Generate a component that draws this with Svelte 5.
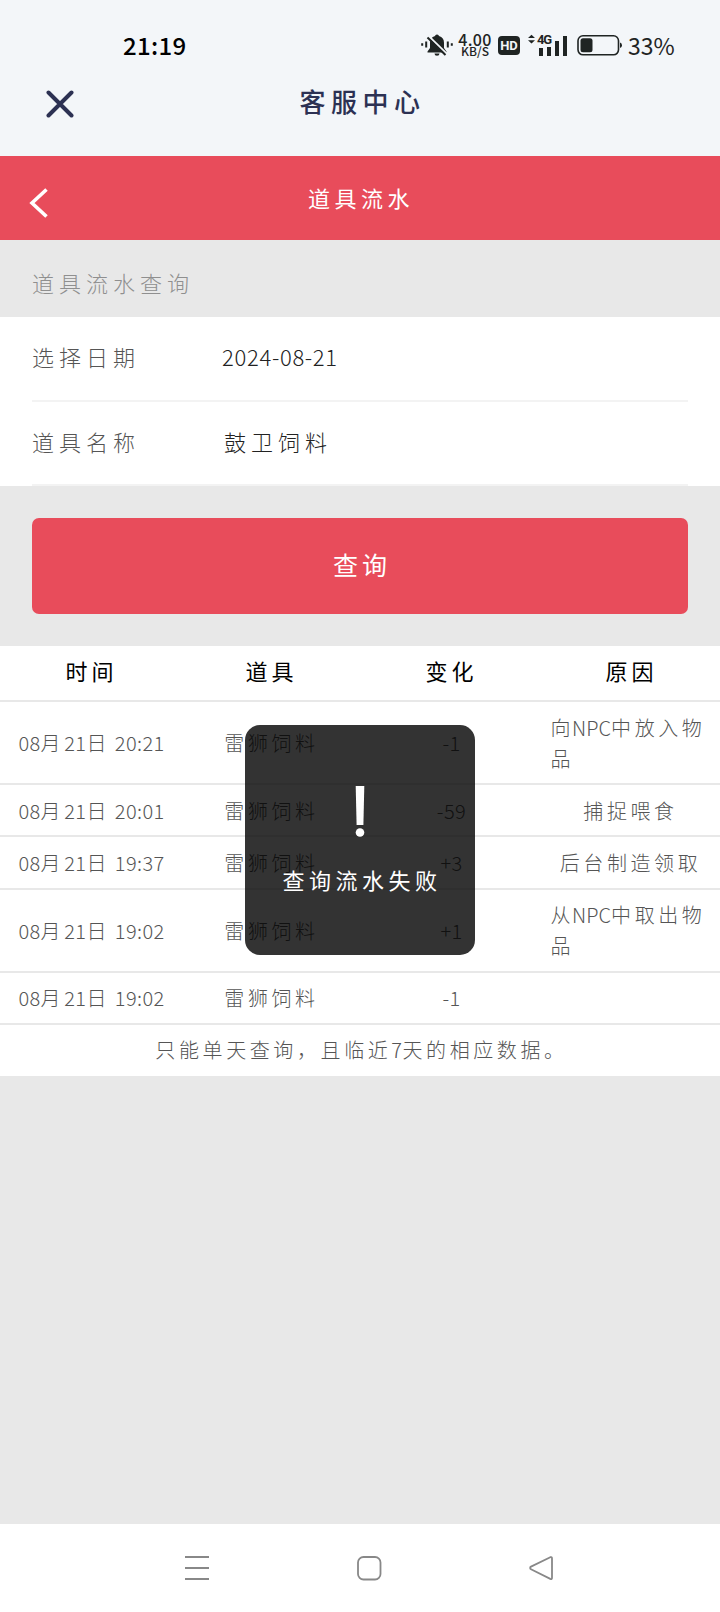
<script lang="ts">
	interface FlowRecord {
		time: string;
		item: string;
		change: string;
		reason: string;
	}

	const fields = [
		{ label: '选择日期', value: '2024-08-21' },
		{ label: '道具名称', value: '鼓卫饲料' }
	];

	const columns = ['时间', '道具', '变化', '原因'];

	const records: FlowRecord[] = [
		{ time: '08月21日 20:21', item: '雷狮饲料', change: '-1', reason: '向NPC中放入物品' },
		{ time: '08月21日 20:01', item: '雷狮饲料', change: '-59', reason: '捕捉喂食' },
		{ time: '08月21日 19:37', item: '雷狮饲料', change: '+3', reason: '后台制造领取' },
		{ time: '08月21日 19:02', item: '雷狮饲料', change: '+1', reason: '从NPC中取出物品' },
		{ time: '08月21日 19:02', item: '雷狮饲料', change: '-1', reason: '' }
	];

	let toast = $state('查询流水失败');

	// Latin runs are set tighter than the Chinese around them
	function runs(text: string) {
		return text.match(/[\x20-\x7e]+|[^\x20-\x7e]+/g) ?? [];
	}
</script>

{#snippet mixed(text: string)}
	{#each runs(text) as run}<span class:latin={/^[\x20-\x7e]/.test(run)}>{run}</span>{/each}
{/snippet}

<div class="screen">
	<div class="status">
		<span class="clock">21:19</span>
		<div class="indicators">
			<svg class="bell" width="32" height="24" viewBox="0 0 32 24">
				<path d="M16 1.5a2 2 0 0 1 2 1.6c3.400.8 5 3.500 5 6.600v5.300l2.500 3.500v1H6.500v-1L9 15V9.700c0-3.100 1.600-5.800 5-6.600a2 2 0 0 1 2-1.600zM13.500 20.500h5a2.500 2.200 0 0 1-5 0z" />
				<path class="gap" d="M7 2.500 26 21" />
				<path class="slash" d="M6.500 4.500 24.500 22" />
				<path class="wave" d="M5.200 8.500v6M1.200 10.300v2.500M26.800 8.500v6M30.800 10.300v2.500" />
			</svg>
			<div class="speed">
				<span class="rate">4.00</span>
				<span class="unit">KB/S</span>
			</div>
			<span class="hd">HD</span>
			<svg class="signal" width="40" height="24" viewBox="0 0 40 24">
				<path d="M0 6.500 3.500 2.500 7 6.500zM0 9 3.500 13 7 9z" transform="translate(0 -.5) scale(1 .85)" />
				<text x="9" y="10.500" textLength="15">4G</text>
				<path d="M11 15h4v8h-4zM19 14h4v9h-4zM27 8h4v15h-4zM35 3h4v20h-4z" />
			</svg>
			<svg class="battery" width="46" height="24" viewBox="0 0 46 24">
				<rect class="shell" x="1" y="2.800" width="40.500" height="19" rx="5" />
				<rect x="3.500" y="5.300" width="12" height="14" rx="2.500" />
				<path d="M43 9.500q2 .5 2 2.800t-2 2.800z" />
			</svg>
			<span class="percent">33%</span>
		</div>
	</div>

	<header class="titlebar">
		<button class="icon-button" aria-label="关闭">
			<svg width="28" height="28" viewBox="0 0 28 28"><path d="M2.500 2.500l23 23M25.500 2.500l-23 23" /></svg>
		</button>
		<h1>客服中心</h1>
	</header>

	<nav class="navbar">
		<button class="icon-button" aria-label="返回">
			<svg width="20" height="32" viewBox="0 0 20 32"><path d="M17.500 2.500 3 16l14.500 13.500" /></svg>
		</button>
		<h2>道具流水</h2>
	</nav>

	<main>
		<h3>道具流水查询</h3>

		<div class="form">
			{#each fields as field}
				<div class="field">
					<span class="label">{field.label}</span>
					<span class="value">{@render mixed(field.value)}</span>
				</div>
			{/each}
		</div>

		<div class="action">
			<button class="query">查询</button>
		</div>

		<div class="table">
			<div class="row head">
				{#each columns as column}
					<div class="cell">{column}</div>
				{/each}
			</div>
			{#each records as record}
				<div class="row">
					<div class="cell">{@render mixed(record.time)}</div>
					<div class="cell">{@render mixed(record.item)}</div>
					<div class="cell">{@render mixed(record.change)}</div>
					<div class="cell reason"><p>{@render mixed(record.reason)}</p></div>
				</div>
			{/each}
			<div class="note">{@render mixed('只能单天查询，且临近7天的相应数据。')}</div>
		</div>
	</main>

	<footer class="keys">
		<svg width="26" height="26" viewBox="0 0 26 26"><path d="M1 2h24M1 13h24M1 24h24" /></svg>
		<svg width="26" height="26" viewBox="0 0 26 26"><rect x="2" y="2" width="22.500" height="22.500" rx="5.500" /></svg>
		<svg width="26" height="26" viewBox="0 0 26 26"><path d="M22.300 2.200 3 11.600a1.500 1.500 0 0 0 0 2.700l19.300 9.600q1.700.6 1.700-1.200V3.400q0-1.800-1.700-1.200z" /></svg>
	</footer>

	{#if toast}
		<div class="toast">
			<svg width="12" height="54" viewBox="0 0 12 54">
				<path d="M1.700 1h8.600l-.9 39H2.600z" />
				<circle cx="6" cy="47.500" r="4.300" />
			</svg>
			<span>{toast}</span>
		</div>
	{/if}
</div>

<style>
	:global(body) {
		background: #e8e8e8;
	}

	.screen {
		position: relative;
		display: flex;
		flex-direction: column;
		width: 720px;
		height: 1612px;
		overflow: hidden;
		background: #e8e8e8;
		font-family: 'Noto Sans CJK SC', sans-serif;
		font-weight: 300;
	}

	h1,
	h2,
	h3,
	p {
		margin: 0;
		font-weight: inherit;
	}

	button {
		padding: 0;
		border: 0;
		background: none;
		font-family: inherit;
	}

	svg {
		display: block;
		flex: none;
	}

	/* Status bar */
	.status {
		display: flex;
		align-items: center;
		justify-content: space-between;
		height: 74px;
		padding: 16px 45px 0 123px;
		box-sizing: border-box;
		background: #f3f6f9;
		color: #1f2423;
	}

	.clock {
		color: #000;
		font-size: 24px;
		font-weight: 500;
		line-height: 28px;
		letter-spacing: 0.3px;
	}

	.indicators {
		display: flex;
		align-items: center;
		fill: #1f2423;
	}

	.gap {
		stroke: #f3f6f9;
		stroke-width: 2;
	}

	.slash {
		stroke: #1f2423;
		stroke-width: 2;
	}

	.wave {
		stroke: #1f2423;
		stroke-width: 2;
	}

	.speed {
		display: flex;
		flex-direction: column;
		align-items: center;
		width: 34px;
		margin-left: 5px;
		font-weight: 500;
	}

	.rate {
		font-size: 16px;
		line-height: 12px;
		letter-spacing: 0.3px;
	}

	.unit {
		font-size: 12px;
		line-height: 12px;
	}

	.hd {
		width: 22px;
		margin-left: 6px;
		border-radius: 4px;
		background: #1f2423;
		color: #f3f6f9;
		font-family: Roboto, sans-serif;
		font-size: 13px;
		font-weight: 700;
		line-height: 19px;
		text-align: center;
	}

	.signal {
		margin-left: 8px;
		font-family: Roboto, sans-serif;
		font-size: 13px;
		font-weight: 700;
	}

	.battery {
		margin-left: 9px;
	}

	.shell {
		fill: none;
		stroke: #1f2423;
		stroke-width: 1.6;
	}

	.percent {
		width: 47px;
		margin-left: 5px;
		font-size: 23px;
		font-weight: 400;
		line-height: 28px;
	}

	/* Title bars */
	.titlebar,
	.navbar {
		display: grid;
		grid-template-columns: 90px 1fr 90px;
		align-items: center;
		text-align: center;
	}

	.titlebar {
		height: 82px;
		padding-bottom: 25px;
		box-sizing: border-box;
		background: #f3f6f9;
		color: #2c3153;
	}

	.titlebar .icon-button {
		padding: 3px 0 0 46px;
	}

	.titlebar svg {
		stroke: #2c3153;
		stroke-width: 4;
		stroke-linecap: round;
	}

	.titlebar h1 {
		padding-bottom: 4px;
		font-size: 26px;
		font-weight: 500;
		line-height: 36px;
		letter-spacing: 5.5px;
		text-indent: 5px;
	}

	.navbar {
		height: 84px;
		background: #e84c5b;
		color: #fff;
	}

	.navbar .icon-button {
		padding: 9px 0 0 29px;
	}

	.navbar svg {
		fill: none;
		stroke: #fff;
		stroke-width: 3.6;
	}

	.navbar h2 {
		padding-bottom: 2px;
		font-size: 22px;
		font-weight: 400;
		letter-spacing: 4.5px;
		text-indent: 2px;
	}

	/* Query form */
	main {
		flex: 1;
	}

	h3 {
		height: 77px;
		padding: 9px 32px 0;
		box-sizing: border-box;
		color: #8f8f8f;
		font-size: 22px;
		line-height: 66px;
		letter-spacing: 5px;
	}

	.form {
		padding: 0 32px;
		background: #fff;
	}

	.field {
		display: flex;
		align-items: center;
		height: 85px;
		padding-bottom: 5px;
		box-sizing: border-box;
		border-bottom: 2px solid #f3f3f3;
		font-size: 22px;
		letter-spacing: 5px;
	}

	.field:last-child {
		height: 84px;
	}

	.label {
		width: 190px;
		color: #555;
	}

	.value {
		color: #222;
	}

	.value span:not(.latin) {
		margin-left: 2px;
	}

	.latin {
		letter-spacing: 0.4px;
	}

	.value .latin {
		letter-spacing: 0.7px;
	}

	.action {
		padding: 32px;
	}

	.query {
		display: block;
		width: 100%;
		height: 96px;
		padding-bottom: 4px;
		border-radius: 7px;
		background: #e84c5b;
		color: #fff;
		font-size: 25px;
		font-weight: 400;
		letter-spacing: 4px;
		text-indent: 4px;
	}

	/* Records */
	.table {
		background: #fff;
		color: #555;
		font-size: 20px;
		line-height: 31px;
		letter-spacing: 3.6px;
	}

	.row {
		display: grid;
		grid-template-columns: repeat(4, 1fr);
		align-items: center;
		padding: 9.6px 0;
		border-bottom: 2px solid #e8e8e8;
	}

	.head {
		padding: 9px 0 14px;
		color: #000;
		font-size: 22px;
		font-weight: 400;
		letter-spacing: 4px;
	}

	.cell {
		display: flex;
		justify-content: center;
		min-width: 0;
		padding-left: 3px;
		white-space: pre;
	}

	.cell p {
		max-width: 160px;
		white-space: normal;
	}

	.reason {
		padding-left: 1px;
	}

	.reason .latin {
		margin-left: -2px;
		letter-spacing: 0;
	}

	.note {
		padding: 9px 0 11px;
		text-align: center;
		text-indent: 3px;
	}

	/* System keys */
	.keys {
		display: flex;
		justify-content: center;
		gap: 146px;
		height: 88px;
		padding: 31px 0 0 17px;
		box-sizing: border-box;
		background: #fff;
		fill: none;
		stroke: #888;
		stroke-width: 1.8;
	}

	.toast {
		position: absolute;
		top: 725px;
		left: 245px;
		display: flex;
		flex-direction: column;
		align-items: center;
		gap: 23px;
		width: 230px;
		height: 230px;
		padding-top: 60px;
		box-sizing: border-box;
		border-radius: 15px;
		background: rgba(0, 0, 0, 0.8);
		color: #fff;
		fill: #fff;
		font-size: 22px;
		font-weight: 400;
		line-height: 34px;
		letter-spacing: 4.5px;
		text-indent: 4px;
	}
</style>
